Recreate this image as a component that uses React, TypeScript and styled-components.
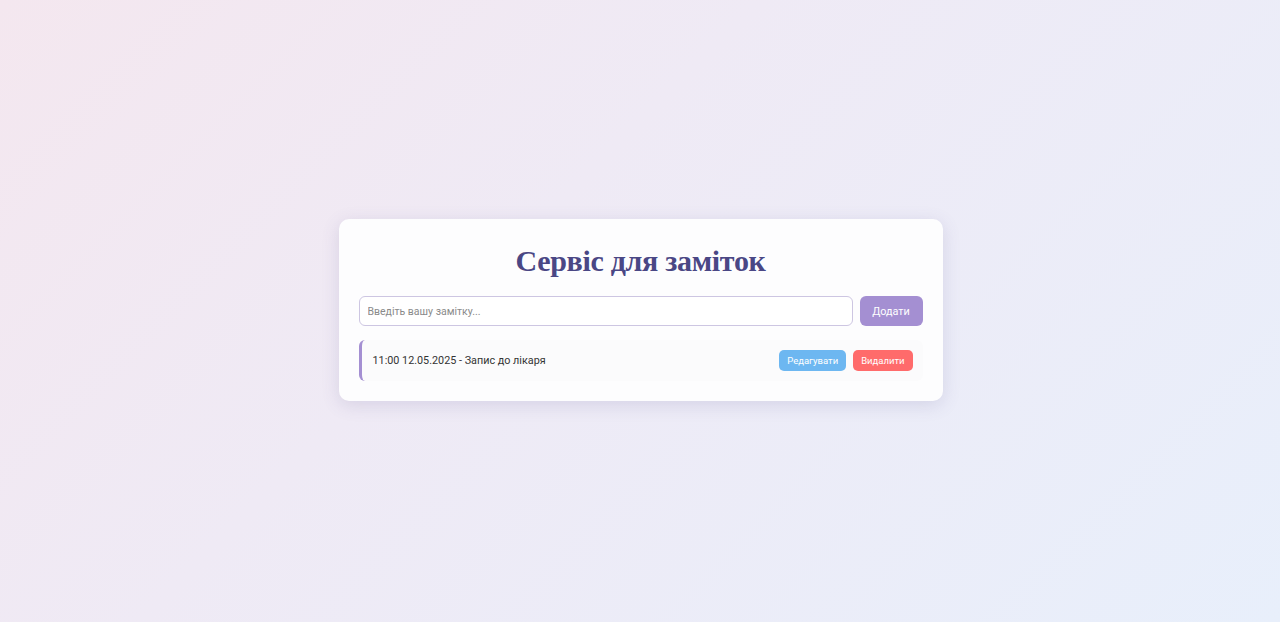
import React, { useState } from "react";
import styled, { createGlobalStyle } from "styled-components";

const Global = createGlobalStyle`
  html, body { margin: 0; padding: 0; }
  body {
    font-family: Roboto, "Liberation Sans", sans-serif;
    background: linear-gradient(135deg, #f4e7ef 0%, #efeaf5 40%, #e8effb 100%);
    min-height: 622px;
  }
  * { box-sizing: border-box; }
`;

const Page = styled.div`
  min-height: 622px;
  display: flex;
  align-items: center;
  justify-content: center;
  padding: 0 0 2px 1px;
`;

const Card = styled.div`
  width: 604px;
  background: #fdfdfe;
  border-radius: 10px;
  padding: 20px;
  box-shadow: 0 4px 18px rgba(90, 80, 140, 0.16);
  display: flex;
  flex-direction: column;
`;

const Title = styled.h1`
  margin: 2px 0 15px;
  text-align: center;
  font-family: "Liberation Serif", "DejaVu Serif", serif;
  font-weight: 700;
  font-size: 30px;
  line-height: 40px;
  letter-spacing: -0.3px;
  color: #4a4785;
`;

const Form = styled.div`
  display: flex;
  gap: 7px;
`;

const Input = styled.input`
  flex: 1;
  height: 30px;
  border: 1.5px solid #cdc6e2;
  border-radius: 6px;
  padding: 0 8px;
  font-family: Roboto, "Liberation Sans", sans-serif;
  font-size: 10.5px;
  color: #333;
  background: #fff;
  outline: none;
  &::placeholder { color: #8a8a8a; }
`;

const AddButton = styled.button`
  width: 63px;
  height: 30px;
  border: none;
  border-radius: 6px;
  background: #a48fd2;
  color: #fff;
  font-family: Roboto, "Liberation Sans", sans-serif;
  font-size: 10.8px;
  cursor: pointer;
`;

const List = styled.div`
  margin-top: 14px;
  display: flex;
  flex-direction: column;
  gap: 8px;
`;

const Note = styled.div`
  display: flex;
  align-items: center;
  justify-content: space-between;
  height: 41px;
  padding: 0 10px 0 11px;
  background: #fbfbfc;
  border-left: 3px solid #a48fd2;
  border-radius: 6px;
`;

const NoteText = styled.span`
  font-size: 10.8px;
  color: #333;
`;

const Actions = styled.div`
  display: flex;
  gap: 7px;
`;

const SmallButton = styled.button<{ $variant: "edit" | "del" }>`
  height: 21px;
  padding: 0 8px;
  border: none;
  border-radius: 5px;
  background: ${(p) => (p.$variant === "edit" ? "#6db7f1" : "#ff6b6b")};
  color: #fff;
  font-family: Roboto, "Liberation Sans", sans-serif;
  font-size: 9.5px;
  cursor: pointer;
`;

export default function App() {
  const [notes] = useState(["11:00 12.05.2025 - Запис до лікаря"]);
  return (
    <>
      <Global />
      <Page>
        <Card>
          <Title>Сервіс для заміток</Title>
          <Form>
            <Input placeholder="Введіть вашу замітку..." />
            <AddButton>Додати</AddButton>
          </Form>
          <List>
            {notes.map((n) => (
              <Note key={n}>
                <NoteText>{n}</NoteText>
                <Actions>
                  <SmallButton $variant="edit">Редагувати</SmallButton>
                  <SmallButton $variant="del">Видалити</SmallButton>
                </Actions>
              </Note>
            ))}
          </List>
        </Card>
      </Page>
    </>
  );
}
